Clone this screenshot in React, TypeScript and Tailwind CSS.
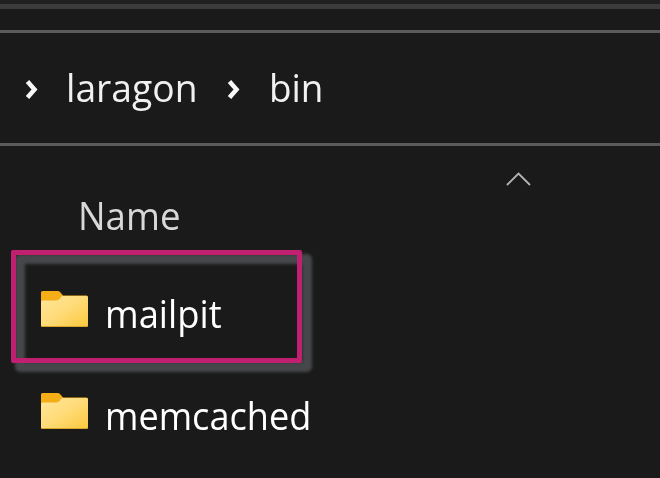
const FolderIcon = ({ id }: { id: string }) => (
  <svg width="48" height="37" viewBox="0 0 48 37" className="block shrink-0">
    <defs>
      <linearGradient id={id} x1="0" y1="0" x2="1" y2="1">
        <stop offset="0" stopColor="#ffe69b" />
        <stop offset="0.5" stopColor="#ffdb78" />
        <stop offset="1" stopColor="#fbc83c" />
      </linearGradient>
    </defs>
    <path d="M0 1.500Q0 0 1.500 0H17Q18.500 0 19.500 1.500L22 4.500H45.500Q47 4.500 47 6V20H0Z" fill="#f5ad18" />
    <path d="M0 11Q0 9.500 1.500 9.500H15Q17 9.500 18.500 8L21 5H45.500Q47 5 47 6.500V34.500Q47 36 45.500 36H1.500Q0 36 0 34.500Z" fill={`url(#${id})`} />
    <path d="M1 35.500H46" stroke="#d9a52c" strokeWidth="1" />
  </svg>
);

const Chevron = () => (
  <svg width="14" height="24" viewBox="0 0 14 24" className="block shrink-0">
    <path d="M2.500 6.500L9.500 14.500L2.500 22.500" fill="none" stroke="#f7f7f7" strokeWidth="4.500" />
  </svg>
);

export default function App() {
  return (
    <div className="flex h-[478px] w-[660px] flex-col overflow-hidden whitespace-nowrap bg-[#1a1a1a] font-['Open_Sans','Noto_Sans',sans-serif] text-[38px] leading-[52px] text-white">
      <div className="h-[33px] shrink-0 border-b-[3px] border-[#5a5a5a]">
        <div className="h-[9px] border-b-[5px] border-[#3b3b3b] bg-[#202020]" />
      </div>
      <nav className="flex h-[113px] shrink-0 items-center border-b-[3px] border-[#5a5a5a] pb-[2px] pl-[25px] text-[#f0f0f0]">
        <Chevron />
        <span className="ml-[27px] w-[129px]"><span className="inline-block origin-left scale-x-[0.98]">laragon</span></span>
        <span className="ml-[32px]"><Chevron /></span>
        <span className="ml-[28px]"><span className="inline-block origin-left scale-x-[0.97]">bin</span></span>
      </nav>
      <header className="flex h-[104px] shrink-0 justify-between pl-[78px] pr-[129px] text-[#d8d8d8]">
        <span className="pt-[43px]"><span className="inline-block origin-left scale-x-[0.965]">Name</span></span>
        <svg width="26" height="16" viewBox="0 0 26 16" className="mt-[25px]">
          <path d="M2 14L13.500 2.500L25 14" fill="none" stroke="#b5b5b5" strokeWidth="1.800" />
        </svg>
      </header>
      <main className="relative">
        <div className="absolute left-[15px] top-[4px] h-[118px] w-[297px] rounded-[5px] border-[10px] border-[#46474a] blur-[1.500px]" />
        <div className="absolute left-[11px] top-0 h-[113px] w-[291px] rounded-[2px] border-[5px] border-[#c0206f]" />
        <div className="relative flex h-[102px] pl-[41px] pt-[41px]">
          <FolderIcon id="folderOne" />
          <span className="ml-[16px] -mt-[4px]"><span className="inline-block origin-left scale-x-[0.957]">mailpit</span></span>
        </div>
        <div className="relative flex h-[102px] pl-[41px] pt-[41px]">
          <FolderIcon id="folderTwo" />
          <span className="ml-[16px] -mt-[4px]"><span className="inline-block origin-left scale-x-[0.95]">memcached</span></span>
        </div>
      </main>
    </div>
  );
}
